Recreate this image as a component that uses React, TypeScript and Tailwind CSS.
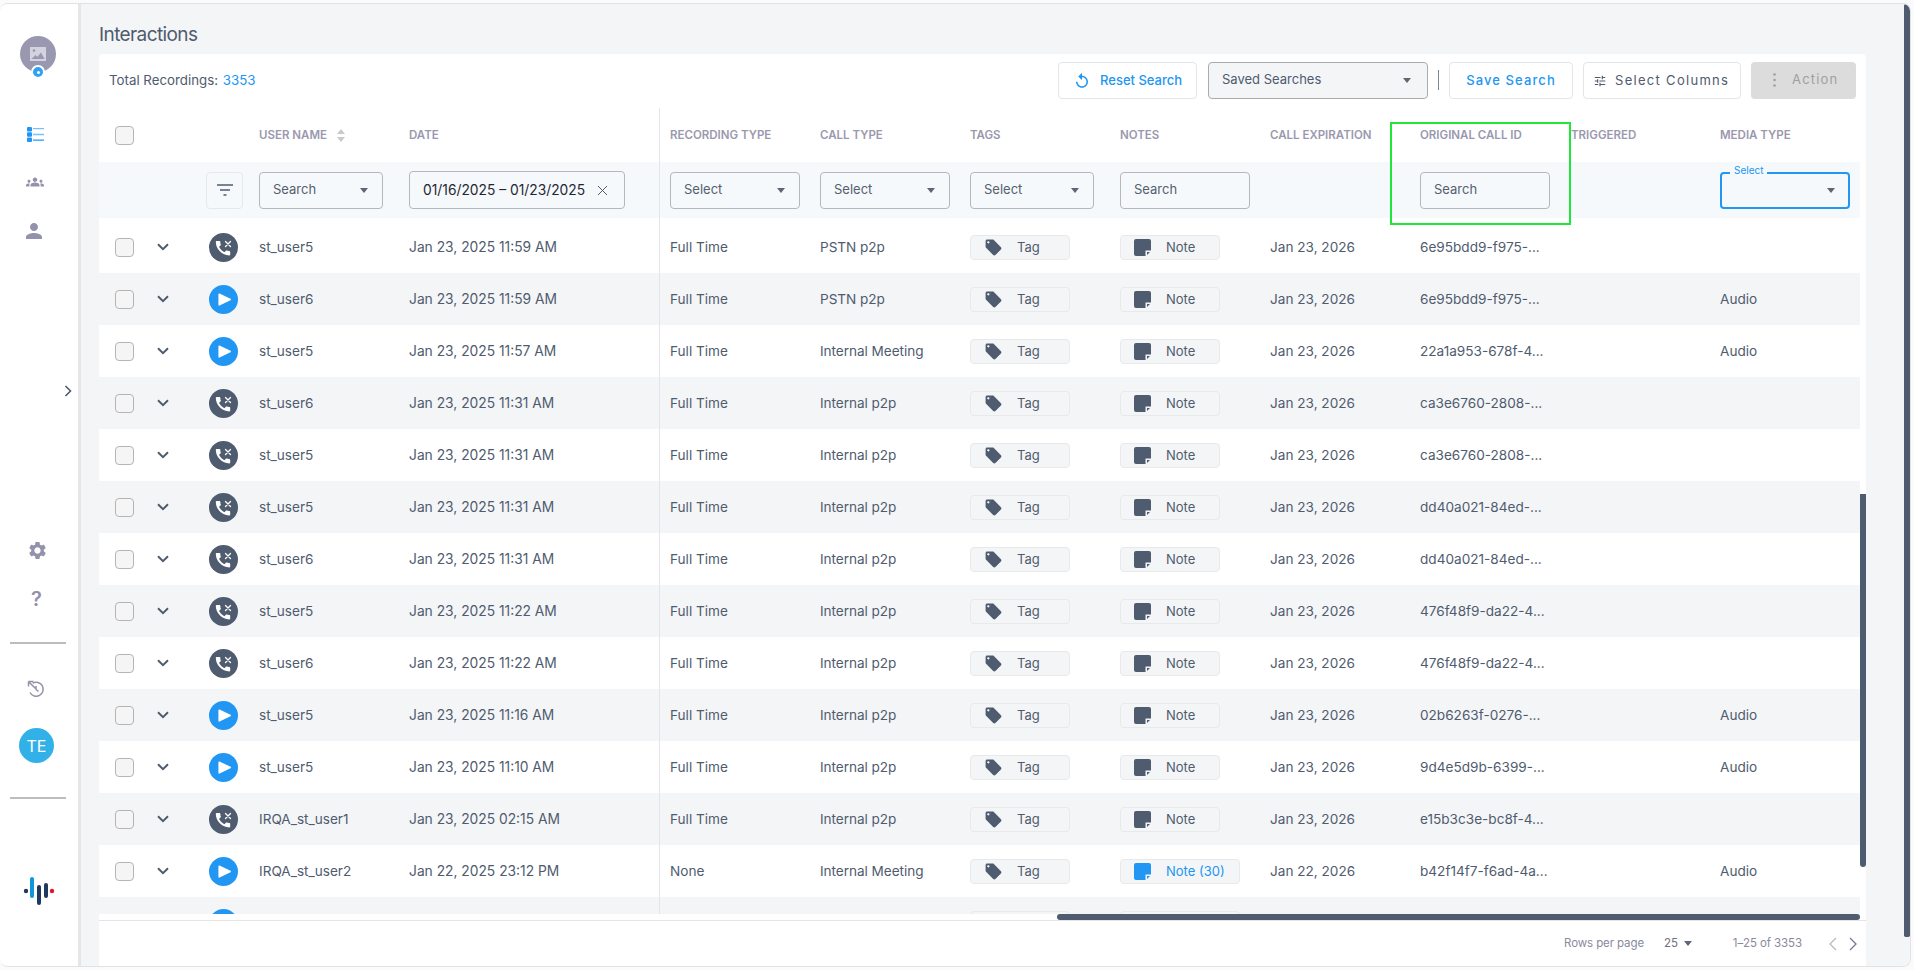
import { X } from "lucide-react";

const rowGrid =
  "grid grid-cols-[51px_26px_83px_150px_251px_160px_150px_150px_150px_150px_151px_149px_140px]";

type Row = {
  user: string;
  date: string;
  rec: string;
  call: string;
  note?: string;
  exp: string;
  id: string;
  media?: string;
  play?: boolean;
  clipped?: boolean;
};

const rows: Row[] = [
  { user: "st_user5", date: "Jan 23, 2025 11:59 AM", rec: "Full Time", call: "PSTN p2p", exp: "Jan 23, 2026", id: "6e95bdd9-f975-..." },
  { user: "st_user6", date: "Jan 23, 2025 11:59 AM", rec: "Full Time", call: "PSTN p2p", exp: "Jan 23, 2026", id: "6e95bdd9-f975-...", media: "Audio", play: true },
  { user: "st_user5", date: "Jan 23, 2025 11:57 AM", rec: "Full Time", call: "Internal Meeting", exp: "Jan 23, 2026", id: "22a1a953-678f-4...", media: "Audio", play: true },
  { user: "st_user6", date: "Jan 23, 2025 11:31 AM", rec: "Full Time", call: "Internal p2p", exp: "Jan 23, 2026", id: "ca3e6760-2808-..." },
  { user: "st_user5", date: "Jan 23, 2025 11:31 AM", rec: "Full Time", call: "Internal p2p", exp: "Jan 23, 2026", id: "ca3e6760-2808-..." },
  { user: "st_user5", date: "Jan 23, 2025 11:31 AM", rec: "Full Time", call: "Internal p2p", exp: "Jan 23, 2026", id: "dd40a021-84ed-..." },
  { user: "st_user6", date: "Jan 23, 2025 11:31 AM", rec: "Full Time", call: "Internal p2p", exp: "Jan 23, 2026", id: "dd40a021-84ed-..." },
  { user: "st_user5", date: "Jan 23, 2025 11:22 AM", rec: "Full Time", call: "Internal p2p", exp: "Jan 23, 2026", id: "476f48f9-da22-4..." },
  { user: "st_user6", date: "Jan 23, 2025 11:22 AM", rec: "Full Time", call: "Internal p2p", exp: "Jan 23, 2026", id: "476f48f9-da22-4..." },
  { user: "st_user5", date: "Jan 23, 2025 11:16 AM", rec: "Full Time", call: "Internal p2p", exp: "Jan 23, 2026", id: "02b6263f-0276-...", media: "Audio", play: true },
  { user: "st_user5", date: "Jan 23, 2025 11:10 AM", rec: "Full Time", call: "Internal p2p", exp: "Jan 23, 2026", id: "9d4e5d9b-6399-...", media: "Audio", play: true },
  { user: "IRQA_st_user1", date: "Jan 23, 2025 02:15 AM", rec: "Full Time", call: "Internal p2p", exp: "Jan 23, 2026", id: "e15b3c3e-bc8f-4..." },
  { user: "IRQA_st_user2", date: "Jan 22, 2025 23:12 PM", rec: "None", call: "Internal Meeting", note: "Note (30)", exp: "Jan 22, 2026", id: "b42f14f7-f6ad-4a...", media: "Audio", play: true },
  // only the top of this row shows above the scrollbar, so it carries no text
  { user: "", date: "", rec: "", call: "", note: "", exp: "", id: "", play: true, clipped: true },
];

const Caret = ({ className = "" }: { className?: string }) => (
  <svg width="8" height="5" viewBox="0 0 8 5" className={className}>
    <path d="M0 0h8L4 5z" fill="#5f6673" />
  </svg>
);

const Checkbox = () => (
  <div className="ml-[16px] h-[19px] w-[19px] rounded-[4px] border-[1.5px] border-[#b5b5b5] bg-[#f5f5f5]" />
);

const TagIcon = () => (
  <svg viewBox="0 0 24 24" className="h-[19px] w-[19px] fill-[#4f5b6e]">
    <path d="M21.41 11.58l-9-9C12.05 2.22 11.55 2 11 2H4c-1.1 0-2 .9-2 2v7c0 .55.22 1.05.59 1.42l9 9c.36.36.86.58 1.41.58.55 0 1.05-.22 1.41-.59l7-7c.37-.36.59-.86.59-1.41 0-.55-.23-1.06-.59-1.42zM5.5 7C4.67 7 4 6.33 4 5.5S4.67 4 5.5 4 7 4.67 7 5.5 6.33 7 5.5 7z" />
  </svg>
);

const NoteIcon = ({ color }: { color: string }) => (
  <svg viewBox="0 0 17 17" width="17" height="17" fill={color}>
    <path d="M2 0h13a2 2 0 0 1 2 2v9.5h-5.5V17H2a2 2 0 0 1-2-2V2a2 2 0 0 1 2-2z" />
    <path d="M13 13h3l-3 3z" />
  </svg>
);

const MissedIcon = () => (
  <svg width="29" height="29" viewBox="0 0 29 29">
    <circle cx="14.5" cy="14.5" r="14.5" fill="#4f5b6e" />
    <g transform="translate(4.4 5.6) scale(.8)">
      <path
        fill="#fff"
        d="M20.01 15.38c-1.23 0-2.42-.2-3.53-.56-.35-.12-.74-.03-1.01.24l-1.57 1.97c-2.83-1.35-5.48-3.9-6.89-6.83l1.95-1.66c.27-.28.35-.67.24-1.02-.37-1.11-.56-2.3-.56-3.53 0-.54-.45-.99-.99-.99H4.19C3.65 3 3 3.24 3 3.99 3 13.28 10.73 21 20.01 21c.71 0 .99-.63.99-1.18v-3.45c0-.54-.45-.99-.99-.99z"
      />
    </g>
    <path d="M16.5 8.5l5 5M21.5 8.5l-5 5" stroke="#fff" strokeWidth="1.3" strokeLinecap="round" />
  </svg>
);

const PlayIcon = () => (
  <svg width="29" height="29" viewBox="0 0 29 29">
    <circle cx="14.5" cy="14.5" r="14.5" fill="#2196f3" />
    <path d="M10.2 9.2l11 5.3-11 5.3z" fill="#fff" stroke="#fff" strokeWidth="1.6" strokeLinejoin="round" />
  </svg>
);

const SortIcon = () => (
  <svg width="8" height="13" viewBox="0 0 8 13" className="ml-[10px]">
    <path d="M4 0l4 5H0z" fill="#c9c9c9" />
    <path d="M4 13L0 8h8z" fill="#c9c9c9" />
  </svg>
);

const HeaderLabel = ({ text }: { text: string }) => (
  <span className="block text-[11.5px] leading-[16px] font-semibold whitespace-nowrap text-[#9a98ae]">{text}</span>
);

const FilterBox = ({ label, w, caret }: { label: string; w: string; caret?: boolean }) => (
  <div className={`flex h-[37px] items-center justify-between rounded-[4px] border border-[#b4b7bb] pr-[14px] pl-[13px] text-[13px] text-[#555f70] ${w}`}>
    <span>{label}</span>
    {caret && <Caret />}
  </div>
);

const TableRow = ({ row, index }: { row: Row; index: number }) => (
  <div className={`${rowGrid} h-[52px] items-center text-[13.6px] text-[#4f5b6e] ${index % 2 === 0 ? "bg-white" : "bg-[#f4f5f7]"}`}>
    <Checkbox />
    <svg width="12" height="8" viewBox="0 0 12 8" className="ml-[7px]">
      <path d="M1 1.2l5 5 5-5" fill="none" stroke="#4f5b6e" strokeWidth="2" />
    </svg>
    <div className="pl-[33px]">{row.play ? <PlayIcon /> : <MissedIcon />}</div>
    <div>{row.user}</div>
    <div className="flex h-full items-center border-r border-[#e4e5e8] text-[13.8px]">{row.date}</div>
    <div className="pl-[10px]">{row.rec}</div>
    <div className="tracking-[-0.05px]">{row.call}</div>
    <div className="pt-px">
      <div className="flex h-[25px] w-[100px] items-center rounded-[4px] border border-[#e8e9eb] bg-[#f4f5f6] pl-[13px] text-[13px]">
        <TagIcon />
        {!row.clipped && <span className="ml-[14px]">Tag</span>}
      </div>
    </div>
    <div className="pt-px">
      {row.note !== undefined ? (
        <div className="flex h-[25px] w-[120px] items-center rounded-[4px] border border-[#e8e9eb] bg-[#f4f5f6] pl-[13px] text-[13px] text-[#2196f3]">
          <NoteIcon color="#2196f3" />
          {!row.clipped && <span className="ml-[15px]">{row.note}</span>}
        </div>
      ) : (
        <div className="flex h-[25px] w-[100px] items-center rounded-[4px] border border-[#e8e9eb] bg-[#f4f5f6] pl-[13px] text-[13px]">
          <NoteIcon color="#4f5b6e" />
          <span className="ml-[15px]">Note</span>
        </div>
      )}
    </div>
    <div>{row.exp}</div>
    <div>{row.id}</div>
    <div />
    <div>{row.media}</div>
  </div>
);

const Sidebar = () => (
  <aside className="relative flex w-[81px] shrink-0 flex-col border-r-[3px] border-[#e6e6ea] bg-white">
    <div className="relative mt-[32px] ml-[20px] flex h-[36px] w-[36px] items-center justify-center rounded-full bg-[#9a98b0]">
      <svg width="16" height="14" viewBox="0 0 16 14">
        <rect width="16" height="14" fill="#d3d2de" />
        <circle cx="4" cy="3.6" r="1.3" fill="#9a98b0" />
        <path d="M1.5 12l4-4 2 1.8L11 5.5l3.5 6.5z" fill="#9a98b0" />
      </svg>
      <div className="absolute top-[29px] left-[11px] box-content flex h-[10px] w-[10px] items-center justify-center rounded-full border-[2px] border-white bg-[#2fa2f6]">
        <div className="h-[3px] w-[3px] rounded-full bg-white" />
      </div>
    </div>

    {/* nav */}
    <svg width="17" height="15" viewBox="0 0 17 15" className="mt-[55px] ml-[27px]">
      <rect y="0" width="5" height="4.4" rx="1" fill="#2196f3" />
      <rect y="5.3" width="5" height="4.4" rx="1" fill="#2196f3" />
      <rect y="10.6" width="5" height="4.4" rx="1" fill="#2196f3" />
      <path d="M6 1.6h11" stroke="#7cc0f8" strokeWidth="1.4" />
      <path d="M6 7.5h11" stroke="#7cc0f8" strokeWidth="1.4" />
      <path d="M6 13.2h11" stroke="#2196f3" strokeWidth="1.2" />
    </svg>
    <svg viewBox="0 0 24 24" className="mt-[31px] ml-[26px] h-[18px] w-[18px] fill-[#9391ab]">
      <path d="M12 12.75c1.63 0 3.07.39 4.24.9 1.08.48 1.76 1.56 1.76 2.73V18H6v-1.61c0-1.18.68-2.26 1.76-2.73 1.17-.52 2.61-.91 4.24-.91zM4 13c1.1 0 2-.9 2-2s-.9-2-2-2-2 .9-2 2 .9 2 2 2zm1.13 1.1c-.37-.06-.74-.1-1.13-.1-.99 0-1.93.21-2.78.58C.48 14.9 0 15.62 0 16.43V18h4.5v-1.61c0-.83.23-1.61.63-2.29zM20 13c1.1 0 2-.9 2-2s-.9-2-2-2-2 .9-2 2 .9 2 2 2zm4 3.43c0-.81-.48-1.53-1.22-1.85-.85-.37-1.79-.58-2.78-.58-.39 0-.76.04-1.13.1.4.68.63 1.46.63 2.29V18H24v-1.57zM12 6c1.66 0 3 1.34 3 3s-1.34 3-3 3-3-1.34-3-3 1.34-3 3-3z" />
    </svg>
    <svg viewBox="0 0 24 24" className="mt-[28px] ml-[22px] h-[24px] w-[24px] fill-[#9391ab]">
      <path d="M12 12c2.21 0 4-1.79 4-4s-1.79-4-4-4-4 1.79-4 4 1.79 4 4 4zm0 2c-2.67 0-8 1.34-8 4v2h16v-2c0-2.66-5.33-4-8-4z" />
    </svg>

    <svg viewBox="0 0 24 24" className="mt-[297px] ml-[27px] h-[21px] w-[21px] fill-[#9391ab]">
      <path d="M19.14 12.94c.04-.3.06-.61.06-.94 0-.32-.02-.64-.07-.94l2.03-1.58c.18-.14.23-.41.12-.61l-1.92-3.32c-.12-.22-.37-.29-.59-.22l-2.39.96c-.5-.38-1.03-.7-1.62-.94l-.36-2.54c-.04-.24-.24-.41-.48-.41h-3.84c-.24 0-.43.17-.47.41l-.36 2.54c-.59.24-1.13.57-1.62.94l-2.39-.96c-.22-.08-.47 0-.59.22L2.74 8.87c-.12.21-.08.47.12.61l2.03 1.58c-.05.3-.09.63-.09.94s.02.64.07.94l-2.03 1.58c-.18.14-.23.41-.12.61l1.92 3.32c.12.22.37.29.59.22l2.39-.96c.5.38 1.03.7 1.62.94l.36 2.54c.05.24.24.41.48.41h3.84c.24 0 .44-.17.47-.41l.36-2.54c.59-.24 1.13-.56 1.62-.94l2.39.96c.22.08.47 0 .59-.22l1.92-3.32c.12-.22.07-.47-.12-.61l-2.01-1.58zM12 15.6c-1.98 0-3.6-1.62-3.6-3.6s1.62-3.6 3.6-3.6 3.6 1.62 3.6 3.6-1.62 3.6-3.6 3.6z" />
    </svg>
    <div className="mt-[26px] ml-[31px] text-[20px] leading-[24px] font-semibold text-[#9391ab]">?</div>
    <div className="mt-[31px] ml-[10px] h-[2px] w-[56px] bg-[#bdbdc0]" />

    <svg width="18" height="18" viewBox="0 0 18 18" fill="none" stroke="#9391ab" strokeWidth="1.5" className="mt-[36px] ml-[27px]">
      <path d="M1.5 1.5l7 7M1.5 1.5v5M1.5 1.5h5" />
      <path d="M5.6 3.2A7 7 0 1 1 3 12.5" />
      <path d="M9 6v3.5l2.5 2" />
    </svg>
    <div className="mt-[30px] ml-[19px] flex h-[35px] w-[35px] items-center justify-center rounded-full bg-[#32b1e8] text-[16px] text-white">
      TE
    </div>
    <div className="mt-[34px] ml-[10px] h-[2px] w-[56px] bg-[#bdbdc0]" />

    <svg width="32" height="30" viewBox="0 0 32 30" className="mt-[77px] ml-[23px]">
      <circle cx="3" cy="15" r="2.2" fill="#1f3a5f" />
      <rect x="7" y="1" width="4" height="21" rx="2" fill="#1296db" />
      <rect x="14" y="9" width="4" height="20" rx="2" fill="#1f3a5f" />
      <rect x="21" y="7" width="4" height="15" rx="2" fill="#1f3a5f" />
      <circle cx="29" cy="15" r="2.2" fill="#e8102a" />
    </svg>

    <svg width="8" height="12" viewBox="0 0 8 12" className="absolute top-[381px] left-[64px]">
      <path d="M1.5 1l5 5-5 5" fill="none" stroke="#4f5b6e" strokeWidth="1.6" />
    </svg>
  </aside>
);

const Toolbar = () => (
  <div className="flex h-[52px] shrink-0 items-center pr-[10px] pl-[10px]">
    <div className="pt-[2px] text-[13.3px] text-[#4f5b6e]">
      Total Recordings: <span className="ml-[1px] text-[#2196f3]">3353</span>
    </div>
    <div className="ml-auto flex items-center">
      <div className="flex h-[37px] w-[139px] items-center rounded-[4px] border border-[#e4e5e8] pt-px pl-[14px] text-[13px] font-medium text-[#2196f3]">
        <svg viewBox="0 0 24 24" className="h-[18px] w-[18px] fill-[#2196f3]">
          <path d="M12 5V1L7 6l5 5V7c3.31 0 6 2.69 6 6s-2.69 6-6 6-6-2.69-6-6H4c0 4.42 3.58 8 8 8s8-3.58 8-8-3.58-8-8-8z" />
        </svg>
        <span className="ml-[9px]">Reset Search</span>
      </div>
      <div className="ml-[11px] flex h-[37px] w-[220px] items-center justify-between rounded-[4px] border border-[#a9abae] bg-[#f4f5f7] pr-[16px] pl-[13px] text-[13px] text-[#4f5b6e]">
        <span>Saved Searches</span>
        <Caret />
      </div>
      <div className="ml-[10px] h-[20px] w-px bg-[#7c8595]" />
      <div className="ml-[10px] flex h-[37px] w-[124px] items-center justify-center rounded-[4px] border border-[#e4e5e8] pt-[2px] text-[13px] font-medium tracking-[1.1px] text-[#2196f3]">
        Save Search
      </div>
      <div className="ml-[10px] flex h-[37px] w-[158px] items-center rounded-[4px] border border-[#e4e5e8] pt-[2px] pl-[9px] text-[13px] tracking-[1.3px] text-[#4f5b6e]">
        <svg viewBox="0 0 24 24" className="h-[14px] w-[14px] fill-[#4f5b6e]">
          <path d="M3 17v2h6v-2H3zM3 5v2h10V5H3zm10 16v-2h8v-2h-8v-2h-2v6h2zM7 9v2H3v2h4v2h2V9H7zm14 4v-2H11v2h10zm-6-4h2V7h4V5h-4V3h-2v6z" />
        </svg>
        <span className="ml-[8px]">Select Columns</span>
      </div>
      <div className="ml-[10px] flex h-[37px] w-[105px] items-center rounded-[4px] bg-[#dcdcdc] pl-[22px] text-[13px] tracking-[1.2px] text-[#a0a0a0]">
        <svg width="3" height="14" viewBox="0 0 3 14" fill="#a0a0a0">
          <circle cx="1.5" cy="1.5" r="1.3" />
          <circle cx="1.5" cy="7" r="1.3" />
          <circle cx="1.5" cy="12.5" r="1.3" />
        </svg>
        <span className="ml-[16px]">Action</span>
      </div>
    </div>
  </div>
);

const HeaderRows = () => (
  <>
    <div className={`${rowGrid} h-[56px] items-center pt-[2px]`}>
      <Checkbox />
      <div />
      <div />
      <div className="flex items-center">
        <HeaderLabel text="USER NAME" />
        <SortIcon />
      </div>
      <div className="flex h-full items-center border-r border-[#e4e5e8]">
        <HeaderLabel text="DATE" />
      </div>
      <div className="pl-[10px]">
        <HeaderLabel text="RECORDING TYPE" />
      </div>
      <HeaderLabel text="CALL TYPE" />
      <HeaderLabel text="TAGS" />
      <HeaderLabel text="NOTES" />
      <HeaderLabel text="CALL EXPIRATION" />
      <HeaderLabel text="ORIGINAL CALL ID" />
      <HeaderLabel text="TRIGGERED" />
      <HeaderLabel text="MEDIA TYPE" />
    </div>
    <div className={`${rowGrid} h-[56px] items-center bg-[#f6f9fb]`}>
      <div />
      <div />
      <div className="pl-[30px]">
        <div className="flex h-[37px] w-[37px] items-center justify-center rounded-[4px] border border-[#e6e8ea]">
          <svg width="16" height="12" viewBox="0 0 16 12" stroke="#4f5b6e" strokeWidth="1.5">
            <path d="M0 1h16M3 6h10M6.5 11h3" />
          </svg>
        </div>
      </div>
      <FilterBox label="Search" w="w-[124px]" caret />
      <div className="flex h-full items-center border-r border-[#e4e5e8]">
        <div className="flex h-[38px] w-[216px] items-center justify-between rounded-[4px] border border-[#b4b7bb] pr-[13px] pl-[13px] text-[13.8px] text-[#1f2733]">
          <span>01/16/2025 – 01/23/2025</span>
          <X size={17} strokeWidth={1.4} color="#4f5b6e" />
        </div>
      </div>
      <div className="pl-[10px]">
        <FilterBox label="Select" w="w-[130px]" caret />
      </div>
      <FilterBox label="Select" w="w-[130px]" caret />
      <FilterBox label="Select" w="w-[124px]" caret />
      <FilterBox label="Search" w="w-[130px]" />
      <div />
      <FilterBox label="Search" w="w-[130px]" />
      <div />
      <div className="relative flex h-[37px] w-[130px] items-center justify-end rounded-[4px] border-2 border-[#2196f3] pr-[13px]">
        <Caret />
        <span className="absolute -top-[10px] left-[8px] bg-[#f6f9fb] px-[4px] text-[10px] leading-[12px] text-[#2196f3]">Select</span>
      </div>
    </div>
    <div className="h-[3px] w-[561px] border-r border-[#e4e5e8]" />
  </>
);

export default function App() {
  return (
    <div className="flex h-[970px] w-[1914px] bg-[#fbfbfb] py-[3px] pr-[3px] font-[Inter,sans-serif]">
      <div className="flex min-w-0 flex-1 overflow-hidden rounded-lg border-y border-r border-[#e2e2e4]">
        <Sidebar />
        <main className="relative flex min-w-0 flex-1 flex-col bg-[#f4f5f7] pr-[44px] pl-[18px]">
          <h1 className="flex h-[50px] shrink-0 items-center pt-[10px] text-[19px] leading-none font-normal tracking-[-0.6px] text-[#4f5b6e]">Interactions</h1>

          <div className="relative flex min-h-0 flex-1 flex-col rounded-t-[4px] bg-white">
            <Toolbar />
            <div className="w-[1761px] flex-1 overflow-hidden">
              <HeaderRows />
              {rows.map((row, i) => (
                <TableRow key={i} row={row} index={i} />
              ))}
            </div>
            <div className="h-[6px] shrink-0" />
            <div className="flex h-[46px] shrink-0 items-center justify-end border-t border-[#e4e5e8] pr-[9px] text-[11.5px] tracking-[-0.1px] text-[#8a8a9e]">
              <span>Rows per page</span>
              <span className="ml-[20px] text-[#6f6f85]">25</span>
              <Caret className="ml-[6px]" />
              <span className="ml-[41px]">1–25 of 3353</span>
              <svg width="8" height="14" viewBox="0 0 8 14" className="ml-[27px]" fill="none" stroke="#b9b9c6" strokeWidth="1.3">
                <path d="M7 1L1 7l6 6" />
              </svg>
              <svg width="8" height="14" viewBox="0 0 8 14" className="ml-[12px]" fill="none" stroke="#77778f" strokeWidth="1.3">
                <path d="M1 1l6 6-6 6" />
              </svg>
            </div>

            {/* annotation and scroll thumbs */}
            <div className="absolute top-[68px] left-[1291px] h-[103px] w-[181px] border-2 border-[#1ee63a]" />
            <div className="absolute top-[440px] left-[1761px] h-[373px] w-[6px] rounded-b-[3px] bg-[#4f5b6e]" />
            <div className="absolute top-[860px] left-[958px] h-[6px] w-[803px] rounded-[3px] bg-[#4f5b6e]" />
          </div>

          <div className="absolute top-0 right-0 h-[933px] w-[6px] rounded-[3px] rounded-tr-lg bg-[#4f5b6e]" />
        </main>
      </div>
    </div>
  );
}
